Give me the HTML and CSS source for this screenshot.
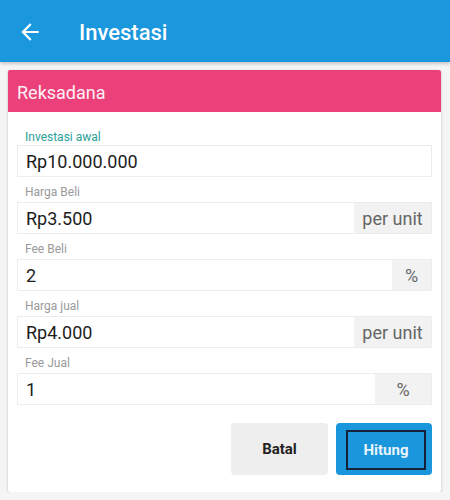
FILE: index.html
```html
<!DOCTYPE html>
<html lang="id">
<head>
    <meta charset="UTF-8">
    <meta name="viewport" content="width=device-width, initial-scale=1.0">
    <title>Investasi</title>
    <link rel="stylesheet" href="styles.css">
</head>
<body>
<!-- App bar -->
<div class="appbar">
    <svg class="back" viewBox="0 0 24 24" width="26" height="26">
        <path d="M20 11H7.83l5.59-5.59L12 4l-8 8 8 8 1.41-1.41L7.83 13H20v-2z" fill="#fff"/>
    </svg>
    <h1>Investasi</h1>
</div>

<!-- Card -->
<div class="card">
    <div class="card-head">Reksadana</div>
    <div class="card-body">
        <div class="field field-focus">
            <label>Investasi awal</label>
            <div class="group">
                <div class="value">Rp10.000.000</div>
            </div>
        </div>
        <div class="field">
            <label>Harga Beli</label>
            <div class="group">
                <div class="value">Rp3.500</div>
                <div class="addon addon-unit">per unit</div>
            </div>
        </div>
        <div class="field">
            <label>Fee Beli</label>
            <div class="group">
                <div class="value">2</div>
                <div class="addon addon-pct">%</div>
            </div>
        </div>
        <div class="field">
            <label>Harga jual</label>
            <div class="group">
                <div class="value">Rp4.000</div>
                <div class="addon addon-unit">per unit</div>
            </div>
        </div>
        <div class="field">
            <label>Fee Jual</label>
            <div class="group">
                <div class="value">1</div>
                <div class="addon addon-pct-wide">%</div>
            </div>
        </div>

        <div class="actions">
            <button class="btn btn-cancel">Batal</button>
            <button class="btn btn-primary"><span>Hitung</span></button>
        </div>
    </div>
</div>
</body>
</html>
```

FILE: styles.css
```css
body {
  margin: 0;
  font-family: Roboto, "Liberation Sans", sans-serif;
  background-color: #f5f5f5;
}

/* app bar */
.appbar {
  height: 62px;
  background-color: #1a97dd;
  display: flex;
  align-items: center;
  padding-top: 2px;
  box-sizing: border-box;
  box-shadow: 0 2px 3px rgba(0, 0, 0, 0.18);
}
.back {
  margin-left: 17px;
  margin-right: 36px;
}
.appbar h1 {
  margin: 0;
  color: #fff;
  font-size: 22px;
  font-weight: 500;
}

/* card */
.card {
  margin: 8px 9px 0 8px;
  background-color: #fff;
  border-radius: 2px;
  box-shadow: 0 1px 3px rgba(0, 0, 0, 0.22);
  padding-bottom: 17px;
}
.card-head {
  height: 42px;
  background-color: #ec407a;
  color: #fdf1f5;
  font-size: 18px;
  display: flex;
  align-items: center;
  padding: 2px 0 0 9px;
  box-sizing: border-box;
  border-radius: 2px 2px 0 0;
}
.card-body {
  padding: 10px 9px 0 9px;
}

/* fields */
.field label {
  display: block;
  font-size: 12px;
  line-height: 13px;
  color: #9a9a9a;
  margin: 9px 0 3px 8px;
}
.field-focus label {
  color: #2aa197;
  margin-bottom: 1px;
}
.group {
  display: flex;
  height: 32px;
  border: 1px solid #ececec;
  box-sizing: border-box;
  background-color: #fff;
}
.value {
  flex: 1;
  display: flex;
  align-items: center;
  padding-left: 8px;
  font-size: 18px;
  color: #1d1d1d;
}
.addon {
  display: flex;
  align-items: center;
  justify-content: center;
  background-color: #f2f2f2;
  color: #666;
  font-size: 18px;
}
.addon-unit {
  width: 77px;
}
.addon-pct {
  width: 39px;
}
.addon-pct-wide {
  width: 56px;
}

/* buttons */
.actions {
  display: flex;
  justify-content: flex-end;
  gap: 8px;
  margin-top: 18px;
}
.btn {
  width: 97px;
  height: 52px;
  border: none;
  border-radius: 4px;
  font-family: Roboto, "Liberation Sans", sans-serif;
  font-size: 15px;
  font-weight: 700;
  cursor: pointer;
}
.btn-cancel {
  background-color: #eeeeee;
  color: #222;
}
.btn-primary {
  width: 96px;
  background-color: #1a96dc;
  color: #e8f4fb;
  padding: 7px 6px 5px 10px;
  display: flex;
}
.btn-primary span {
  flex: 1;
  display: flex;
  align-items: center;
  justify-content: center;
  border: 2px solid #13213a;
}
```
